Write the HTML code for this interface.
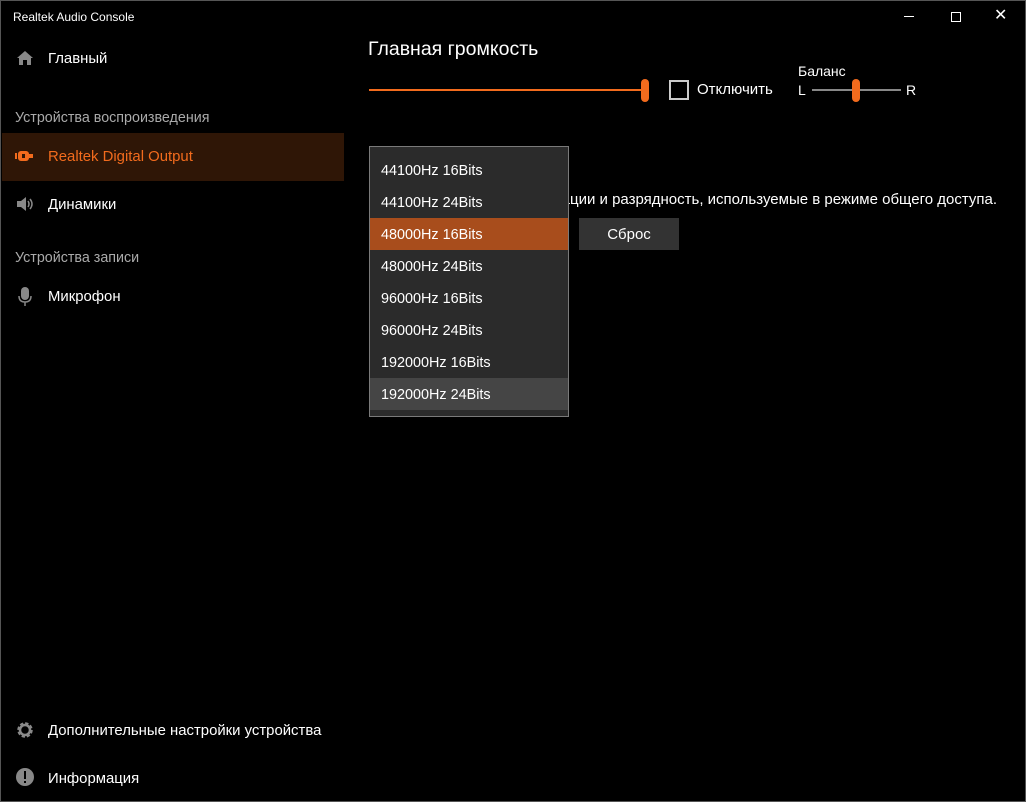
<!DOCTYPE html>
<html><head><meta charset="utf-8"><style>
*{margin:0;padding:0;box-sizing:border-box}
body{width:1026px;height:802px;background:#000;font-family:"Liberation Sans",sans-serif;color:#fff;position:relative;overflow:hidden}
.frame{position:absolute;left:0;top:0;width:1026px;height:802px;border:1px solid #555}
.a{position:absolute;white-space:nowrap}
.nav{font-size:14.9px}
.grey{color:#aaa;font-size:14.3px}
.dd{position:absolute;left:369px;top:146px;width:200px;height:271px;background:#2b2b2b;border:1px solid #7a7a7a}
.it{position:absolute;left:0;width:198px;height:32px;line-height:34px;padding-left:11px;font-size:14.4px;color:#fff}
</style></head><body>
<div class="frame"></div>
<div class="a" style="left:13px;top:10px;font-size:12px">Realtek Audio Console</div>
<div class="a" style="left:904px;top:16px;width:10px;height:1px;background:#fff"></div>
<div class="a" style="left:951px;top:12px;width:10px;height:10px;border:1px solid #fff"></div>
<div class="a" style="left:994px;top:6px;font-size:16px;line-height:20px">✕</div>

<svg class="a" style="left:16px;top:50px" width="18" height="16" viewBox="0 0 18 16"><path d="M9 1L1 8h2v7h4v-5h4v5h4V8h2z" fill="#888"/></svg>
<div class="a nav" style="left:48px;top:51px">Главный</div>
<div class="a grey" style="left:15px;top:110px">Устройства воспроизведения</div>
<div class="a" style="left:2px;top:133px;width:342px;height:48px;background:#2f1606"></div>
<svg class="a" style="left:15px;top:150px" width="20" height="12" viewBox="0 0 20 12"><rect x="0" y="3" width="2" height="6" fill="#f26b1d"/><rect x="3" y="1" width="11" height="10" rx="3" fill="#f26b1d"/><rect x="14" y="4" width="4" height="4" fill="#f26b1d"/><rect x="7" y="4" width="3" height="4" fill="#2f1606"/></svg>
<div class="a nav" style="left:48px;top:149px;color:#f26b1d">Realtek Digital Output</div>
<svg class="a" style="left:16px;top:196px" width="18" height="16" viewBox="0 0 18 16"><path d="M1 5h4l5-4v14l-5-4H1z" fill="#888"/><path d="M12 5q2 3 0 6M14 3q4 5 0 10" stroke="#888" stroke-width="1.5" fill="none"/></svg>
<div class="a nav" style="left:48px;top:197px">Динамики</div>
<div class="a grey" style="left:15px;top:250px">Устройства записи</div>
<svg class="a" style="left:18px;top:287px" width="14" height="20" viewBox="0 0 14 20"><rect x="3" y="0" width="8" height="13" rx="4" fill="#888"/><path d="M1 9q0 6 6 6q6 0 6-6M7 15v4" stroke="#888" stroke-width="1.5" fill="none"/></svg>
<div class="a nav" style="left:48px;top:289px">Микрофон</div>
<svg class="a" style="left:15px;top:720px" width="20" height="20" viewBox="0 0 20 20"><circle cx="10" cy="10" r="6" fill="none" stroke="#888" stroke-width="3.5" stroke-dasharray="3 1.7"/><circle cx="10" cy="10" r="5" fill="none" stroke="#888" stroke-width="2.5"/></svg>
<div class="a nav" style="left:48px;top:723px">Дополнительные настройки устройства</div>
<svg class="a" style="left:15px;top:767px" width="20" height="20" viewBox="0 0 20 20"><circle cx="10" cy="10" r="9" fill="#888"/><rect x="9" y="4" width="2" height="8" fill="#000"/><rect x="9" y="14" width="2" height="2" fill="#000"/></svg>
<div class="a nav" style="left:48px;top:771px">Информация</div>

<div class="a" style="left:368px;top:38px;font-size:19.5px">Главная громкость</div>
<div class="a" style="left:369px;top:89px;width:276px;height:2px;background:#f26b1d"></div>
<div class="a" style="left:641px;top:79px;width:8px;height:23px;border-radius:4px;background:#f26b1d"></div>
<div class="a" style="left:669px;top:80px;width:20px;height:20px;border:2px solid #ccc"></div>
<div class="a" style="left:697px;top:81px;font-size:15px">Отключить</div>
<div class="a" style="left:798px;top:63px;font-size:14px">Баланс</div>
<div class="a" style="left:798px;top:82px;font-size:14px">L</div>
<div class="a" style="left:812px;top:89px;width:89px;height:2px;background:#888"></div>
<div class="a" style="left:852px;top:79px;width:8px;height:23px;border-radius:4px;background:#f26b1d"></div>
<div class="a" style="left:906px;top:82px;font-size:14px">R</div>

<div class="a" style="right:29px;top:191px;font-size:15px">ации и разрядность, используемые в режиме общего доступа.</div>
<div class="a" style="left:579px;top:218px;width:100px;height:32px;background:#333;text-align:center;line-height:34px;font-size:15px">Сброс</div>

<div class="dd">
<div class="it" style="top:7px">44100Hz 16Bits</div>
<div class="it" style="top:39px">44100Hz 24Bits</div>
<div class="it" style="top:71px;background:#a84d1c">48000Hz 16Bits</div>
<div class="it" style="top:103px">48000Hz 24Bits</div>
<div class="it" style="top:135px">96000Hz 16Bits</div>
<div class="it" style="top:167px">96000Hz 24Bits</div>
<div class="it" style="top:199px">192000Hz 16Bits</div>
<div class="it" style="top:231px;background:#454545">192000Hz 24Bits</div>
</div>
</body></html>
